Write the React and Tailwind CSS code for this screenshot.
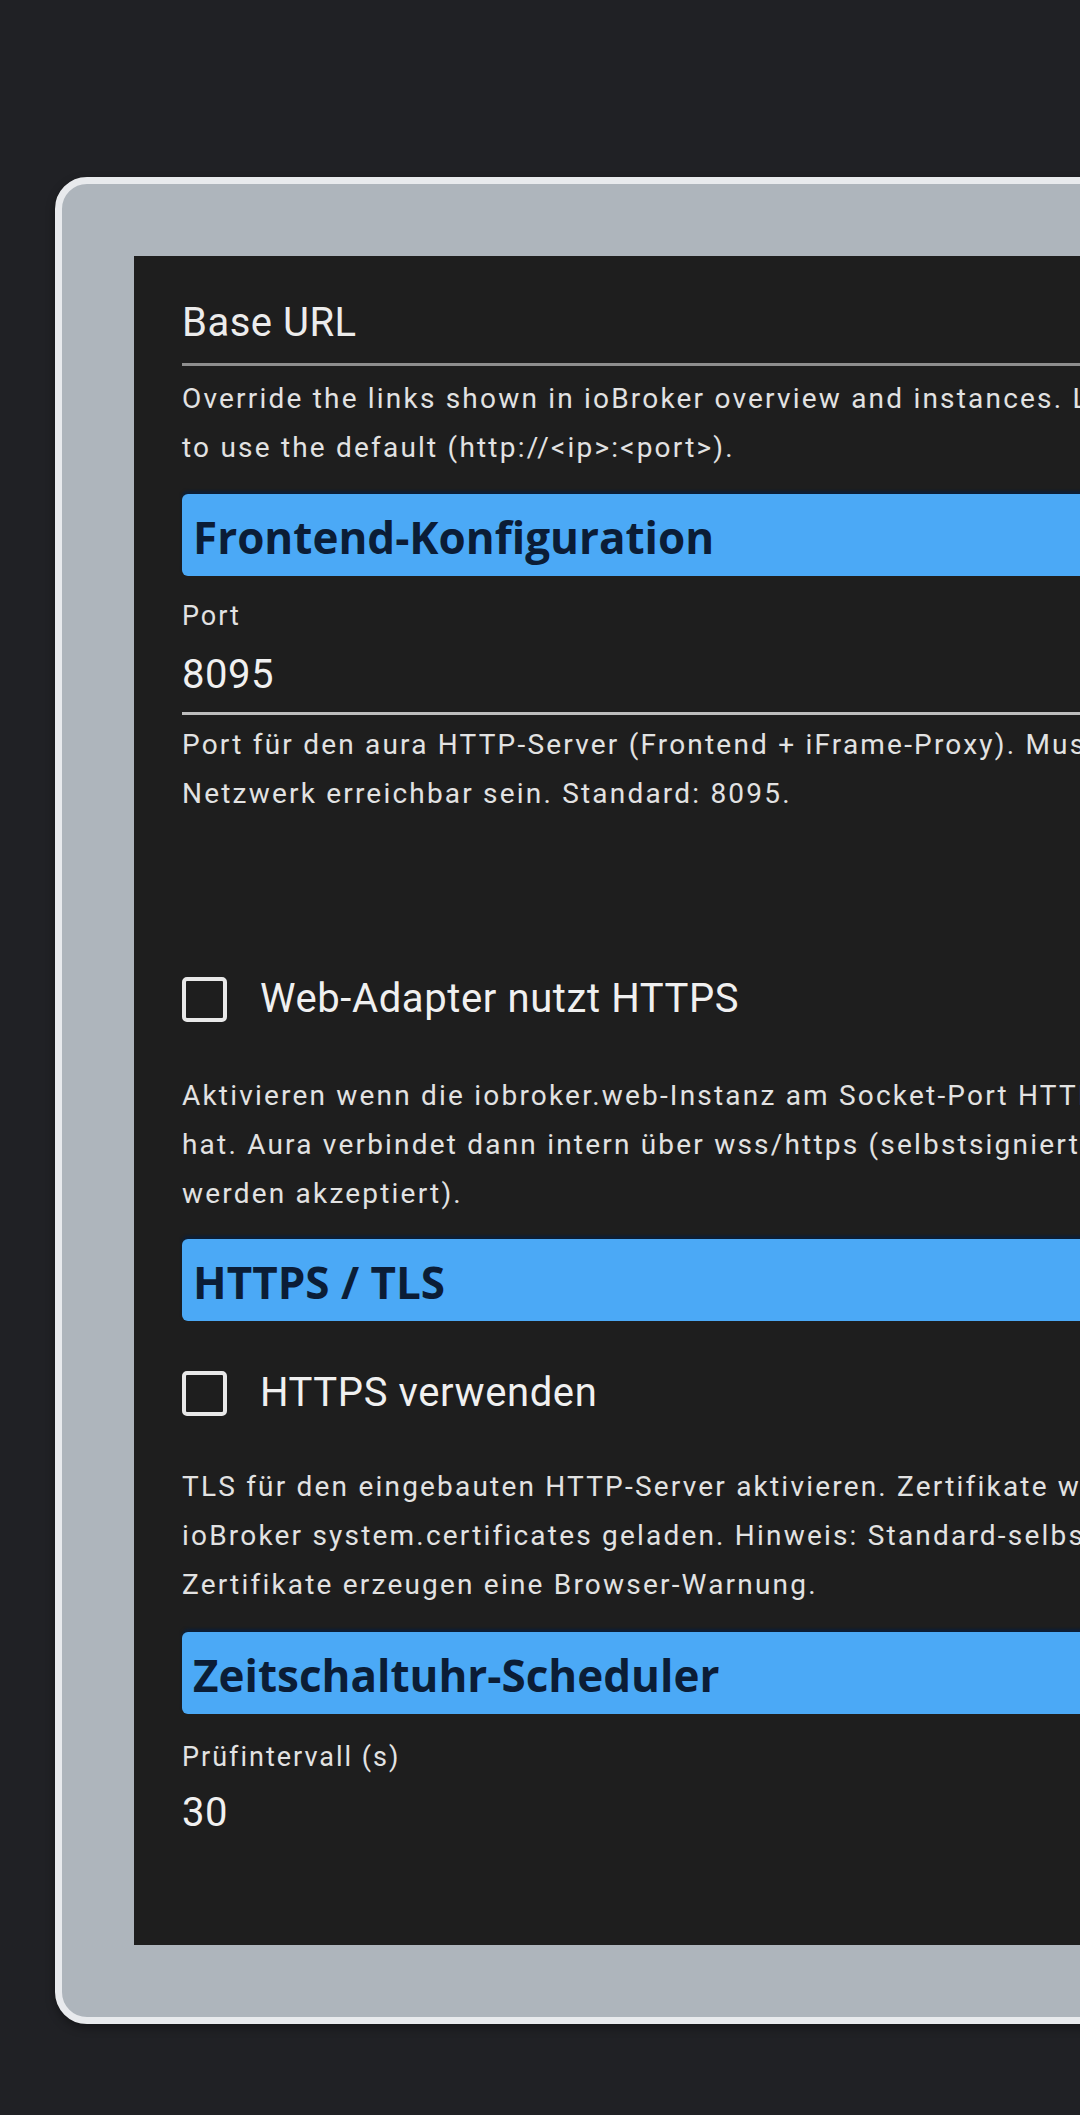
import React from "react";

const roboto = "font-['Roboto','Liberation_Sans',sans-serif]";

function Help({ lines, className = "" }) {
  return (
    <div className={`${className} text-[28px] leading-[49px] tracking-[2.2px] text-[#e2e2e2] ${roboto}`}>
      {lines.map((l, i) => (
        <div key={i} className="whitespace-nowrap">{l}</div>
      ))}
    </div>
  );
}

function Bar({ children, className = "" }) {
  return (
    <div
      className={`${className} h-[82px] rounded-l-[6px] bg-[#4ba9f6] pl-[11px] shadow-[0_-3px_3px_rgba(8,30,60,0.85)] overflow-hidden`}
    >
      <div className="font-['Open_Sans','Noto_Sans',sans-serif] font-bold text-[44px] leading-[86px] text-[#0b1d36] whitespace-nowrap">
        {children}
      </div>
    </div>
  );
}

function Check({ label, className = "" }) {
  return (
    <div className={`${className} flex items-center h-[44px]`}>
      <div className="w-[45px] h-[45px] shrink-0 rounded-[5px] border-[4px] border-[#e8e8e8]" />
      <div className={`ml-[33px] text-[40px] leading-[44px] tracking-[0.6px] text-[#f0f0f0] whitespace-nowrap ${roboto}`}>
        {label}
      </div>
    </div>
  );
}

export default function App() {
  return (
    <div className="w-[1080px] h-[2115px] overflow-hidden bg-[#202125] pt-[177px]">
      <div className="ml-[55px] w-[1200px] rounded-[32px] border-[7px] border-[#e8eaed] bg-[#aeb5bc] p-[72px] shadow-[0_4px_10px_rgba(0,0,0,0.35)]">
        <div className="bg-[#1e1e1e] pt-[43px] pb-[108px] pl-[48px]">
          <div className={`text-[40px] leading-[48px] tracking-[0.5px] text-[#ececec] ${roboto}`}>Base URL</div>
          <div className="mt-[16px] h-[3px] bg-[#8e8e8e]" />
          <Help
            className="mt-[8px]"
            lines={[
              "Override the links shown in ioBroker overview and instances. Leave empty",
              "to use the default (http://<ip>:<port>).",
            ]}
          />
          <Bar className="mt-[22px]">Frontend-Konfiguration</Bar>
          <div className={`mt-[24px] text-[27px] leading-[32px] tracking-[2px] text-[#e2e2e2] ${roboto}`}>Port</div>
          <div className={`mt-[19px] text-[40px] leading-[48px] tracking-[0.5px] text-[#f0f0f0] ${roboto}`}>8095</div>
          <div className="mt-[13px] h-[3px] bg-[#bdbdbd]" />
          <Help
            className="mt-[5px]"
            lines={[
              "Port für den aura HTTP-Server (Frontend + iFrame-Proxy). Muss im lokalen",
              "Netzwerk erreichbar sein. Standard: 8095.",
            ]}
          />
          <Check className="mt-[159px]" label="Web-Adapter nutzt HTTPS" />
          <Help
            className="mt-[50px]"
            lines={[
              "Aktivieren wenn die iobroker.web-Instanz am Socket-Port HTTPS aktiviert",
              "hat. Aura verbindet dann intern über wss/https (selbstsignierte Zertifikate",
              "werden akzeptiert).",
            ]}
          />
          <Bar className="mt-[21px]">HTTPS / TLS</Bar>
          <Check className="mt-[50px]" label="HTTPS verwenden" />
          <Help
            className="mt-[47px]"
            lines={[
              "TLS für den eingebauten HTTP-Server aktivieren. Zertifikate werden aus",
              "ioBroker system.certificates geladen. Hinweis: Standard-selbstsignierte",
              "Zertifikate erzeugen eine Browser-Warnung.",
            ]}
          />
          <Bar className="mt-[23px]">Zeitschaltuhr-Scheduler</Bar>
          <div className={`mt-[27px] text-[27px] leading-[32px] tracking-[2px] text-[#e2e2e2] ${roboto}`}>Prüfintervall (s)</div>
          <div className={`mt-[16px] text-[40px] leading-[48px] tracking-[0.5px] text-[#f0f0f0] ${roboto}`}>30</div>
        </div>
      </div>
    </div>
  );
}
